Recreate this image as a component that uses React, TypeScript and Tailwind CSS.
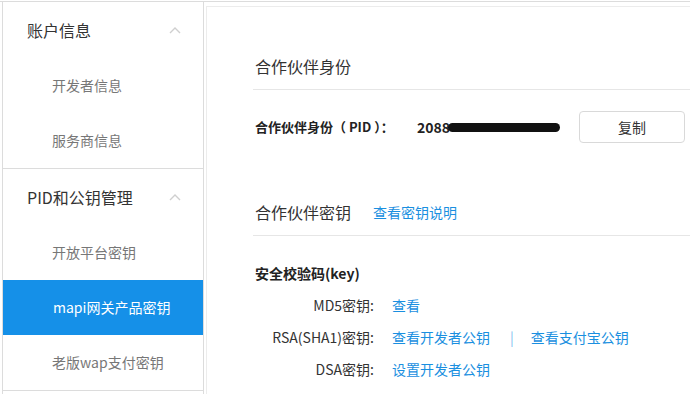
import React from "react";

const FONT = { fontFamily: '"Noto Sans CJK SC", "Liberation Sans", sans-serif' };

type MenuGroup = {
  title: string;
  items: { label: string; active?: boolean }[];
};

const MENU: MenuGroup[] = [
  { title: "账户信息", items: [{ label: "开发者信息" }, { label: "服务商信息" }] },
  {
    title: "PID和公钥管理",
    items: [
      { label: "开放平台密钥" },
      { label: "mapi网关产品密钥", active: true },
      { label: "老版wap支付密钥" },
    ],
  },
];

function Caret() {
  return (
    <svg width="12" height="8" viewBox="0 0 12 8" className="text-[#cfcfcf]">
      <polyline points="1,7 6,2 11,7" fill="none" stroke="currentColor" strokeWidth="1.4" />
    </svg>
  );
}

function Sidebar() {
  return (
    <div className="ml-[2px] w-[202px] shrink-0 border-x border-[#dcdcdc]">
      {MENU.map((group) => (
        <div key={group.title} className="border-b border-[#dcdcdc]">
          <div className="h-[56px] flex items-center justify-between pl-[24px] pr-[22px]">
            <span className="text-[16px] text-[#333]">{group.title}</span>
            <Caret />
          </div>
          {group.items.map((item) => (
            <div
              key={item.label}
              className={
                item.active
                  ? "h-[55px] flex items-center pl-[50px] text-[14px] text-white bg-[#1590e8]"
                  : "h-[55px] flex items-center pl-[49px] text-[14px] text-[#777]"
              }
            >
              {item.label}
            </div>
          ))}
        </div>
      ))}
    </div>
  );
}

function SectionTitle({ title, link, className }: { title: string; link?: string; className: string }) {
  return (
    <div className={`${className} flex items-center gap-[22px] h-[24px] pb-[11px] box-content border-b border-[#e6e6e6]`}>
      <span className="text-[16px] text-[#333] pl-[2px]">{title}</span>
      {link && <span className="text-[14px] text-[#1a8fe0]">{link}</span>}
    </div>
  );
}

function KeyRow({ label, children }: { label: string; children: React.ReactNode }) {
  return (
    <div className="h-[32px] flex items-center text-[14px]">
      <span className="w-[121px] text-right text-[#333]">{label}</span>
      <div className="ml-[18px] flex items-center text-[#1a8fe0]">{children}</div>
    </div>
  );
}

export default function App() {
  return (
    <div className="w-[690px] h-[394px] overflow-hidden bg-white pt-px" style={FONT}>
      <div className="flex h-full border-t border-[#dcdcdc]">
        <Sidebar />
        <div className="flex-1 min-w-0 ml-[2px] mt-[4px] border-t border-l border-[#ececec] pl-[46px]">
          <SectionTitle title="合作伙伴身份" className="mt-[47px]" />

          <div className="mt-[21px] h-[32px] flex items-center whitespace-nowrap">
            <span className="w-[164px] shrink-0 text-[13px] font-bold text-[#222] pl-[2px]">
              合作伙伴身份（ PID ）：
            </span>
            <span className="w-[162px] shrink-0 text-[14px] font-bold text-[#222] flex items-center">
              2088
              <span className="ml-[-2px] w-[112px] h-[9px] rounded-full bg-[#111]" />
            </span>
            <button className="shrink-0 w-[106px] h-[32px] border border-[#d9d9d9] rounded-[4px] bg-white text-[14px] text-[#333]">
              复制
            </button>
          </div>

          <SectionTitle title="合作伙伴密钥" link="查看密钥说明" className="mt-[57px]" />

          <div className="mt-[27px] h-[20px] flex items-center text-[14px] font-bold text-[#222] pl-[2px]">
            安全校验码(key)
          </div>

          <div className="mt-[6px]">
            <KeyRow label="MD5密钥:">查看</KeyRow>
            <KeyRow label="RSA(SHA1)密钥:">
              <span>查看开发者公钥</span>
              <span className="ml-[20px] text-[#7fc0ef]">|</span>
              <span className="ml-[17px]">查看支付宝公钥</span>
            </KeyRow>
            <KeyRow label="DSA密钥:">设置开发者公钥</KeyRow>
          </div>
        </div>
      </div>
    </div>
  );
}
